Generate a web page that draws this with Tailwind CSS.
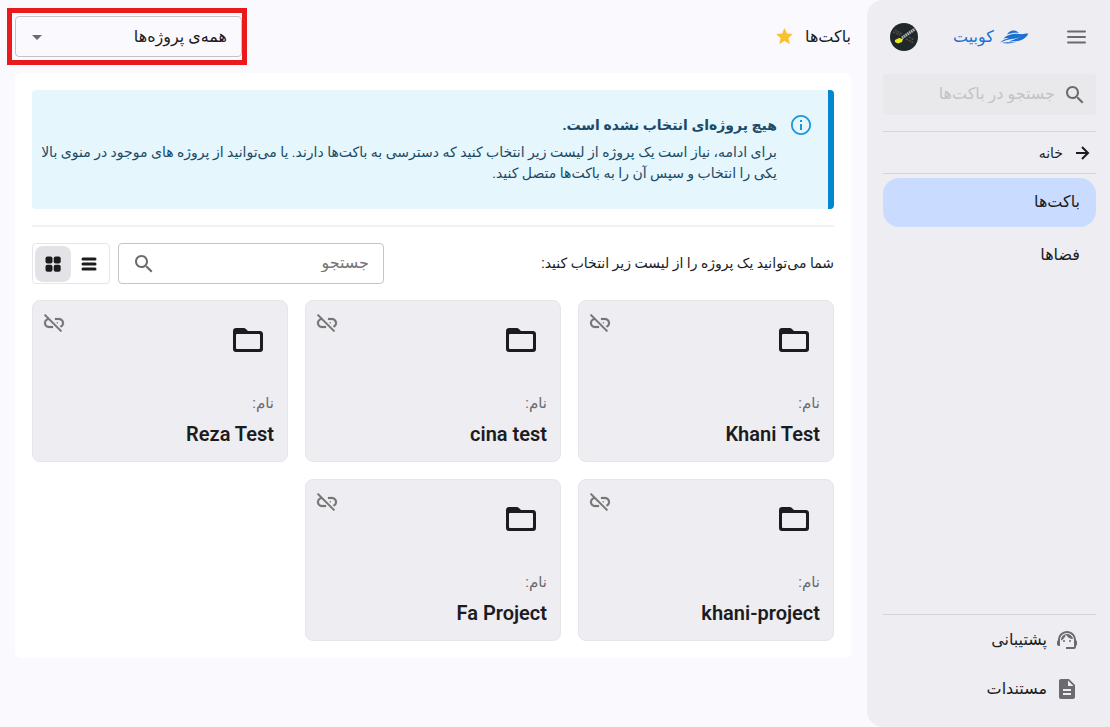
<!DOCTYPE html>
<html lang="fa" dir="rtl">
<head>
<meta charset="utf-8">
<meta name="viewport" content="width=device-width, initial-scale=1">
<title>باکت‌ها</title>
<script src="https://cdn.jsdelivr.net/npm/@tailwindcss/browser@4"></script>
</head>
<body class="flex min-h-screen bg-[#faf9fe] font-['Roboto','DejaVu_Sans',sans-serif] text-[#1c1c1e]">
<svg class="hidden" aria-hidden="true">
  <symbol id="search" viewBox="0 0 24 24"><path d="M15.5 14h-.79l-.28-.27C15.41 12.59 16 11.11 16 9.5 16 5.91 13.09 3 9.5 3S3 5.91 3 9.5 5.91 16 9.5 16c1.61 0 3.09-.59 4.23-1.57l.27.28v.79l5 4.99L20.49 19l-4.99-5zm-6 0C7.01 14 5 11.99 5 9.5S7.01 5 9.5 5 14 7.01 14 9.5 11.99 14 9.5 14z"/></symbol>
  <symbol id="unlink" viewBox="0 0 24 24"><path stroke="currentColor" stroke-width=".2" d="M17 7h-4v1.9h4c1.71 0 3.1 1.39 3.1 3.1 0 1.43-.98 2.63-2.31 2.98l1.46 1.46C20.88 15.61 22 13.95 22 12c0-2.76-2.24-5-5-5zM2 4.27l3.11 3.11C3.29 8.12 2 9.91 2 12c0 2.76 2.24 5 5 5h4v-1.9H7c-1.71 0-3.1-1.39-3.1-3.1 0-1.59 1.21-2.9 2.76-3.07L18.74 21 20 19.74 3.27 3 2 4.27z"/><circle cx="15.300" cy="11.800" r=".8"/></symbol>
  <symbol id="folder" viewBox="0 0 24 24"><path d="M19.300 18H4.700a.7.7 0 0 1-.7-.7V8.700a.7.7 0 0 1 .7-.7h14.600a.7.7 0 0 1 .7.7v8.600a.7.7 0 0 1-.7.7M20 6h-8l-1.400-1.400A2 2 0 0 0 9.200 4H4c-1.110 0-2 .89-2 2v12a2 2 0 0 0 2 2h16a2 2 0 0 0 2-2V8c0-1.110-.9-2-2-2z"/></symbol>
</svg>

<aside class="flex w-[243px] shrink-0 flex-col rounded-e-2xl bg-[#eeedf2] ps-[14px] pe-4">
  <div class="flex h-[74px] items-center justify-between ps-2">
    <button type="button" aria-label="منو" class="text-[#6b6b6f]"><svg class="size-6" viewBox="0 0 24 24" fill="none" stroke="currentColor" stroke-width="2" stroke-linecap="round"><path d="M4 6.500h17M4 12h17M4 17.500h17"/></svg></button>
    <a href="#" class="flex items-center gap-[5px] text-base text-[#1d6fd2]">
      <svg class="h-4 w-[30px]" viewBox="0 0 30 16" fill="currentColor" aria-hidden="true"><path d="M8 5.500C10 2.500 12 1.500 14 1.500C16 1.500 18 2 20 4C17 3.500 12 4 8 5.500z"/><path d="M6 8C11 4.500 17 4.300 20 5C24 5.500 26 4.500 29.300 4.500C28.500 7 25 10.500 21 11.500C17 12.500 13 12 10 12.500C14 10.800 18 10 21 8C15 10.500 9 10 5 12C3 12.800 2 13 1 13.500C2.500 11.500 6 10.500 10 9C8.500 9 6.500 9 4.500 9.500z"/><path d="M3 14C8 12.500 12 14 17 12.700C13 14.700 8 14.600 3 14z"/></svg>
      <span>کوبیت</span>
    </a>
    <button type="button" aria-label="حساب کاربری" class="me-[7px] size-7 overflow-hidden rounded-full"><svg class="size-7" viewBox="0 0 28 28"><path fill="#1f272b" d="M0 0h28v28H0z"/><path stroke="#a9acac" stroke-width="3" stroke-dasharray="1.600 .6" d="M12 15 25 6"/><path fill="#e8ea18" d="m5 17 4-2 4 1-1 3-4 1.500-3-1.500z"/><path stroke="#594a48" stroke-width="1.500" stroke-dasharray="2 1" d="m3 9 7 3M5 7l7 4m4 5 8 4m-5-6 5 3"/></svg></button>
  </div>

  <div class="flex h-[41px] items-center gap-2 rounded bg-[#e9e9eb] ps-[9px] text-[#6b6b6f]">
    <svg class="size-6 shrink-0" fill="currentColor"><use href="#search"/></svg>
    <input type="text" aria-label="جستجو در باکت‌ها" placeholder="جستجو در باکت‌ها" class="h-9 w-full min-w-0 bg-transparent pb-[2px] text-base leading-8 outline-none placeholder:leading-8 placeholder:text-[#c3c2c6]">
  </div>

  <a href="#" class="mt-4 flex h-[43px] items-center gap-[10px] border-y border-[#d6d5da] ps-[5px] text-sm">
    <svg class="size-[18px]" viewBox="0 0 18 18" fill="none" stroke="currentColor" stroke-width="2"><path d="M3 9h12M9 3l6 6-6 6"/></svg>
    خانه
  </a>
  <nav class="mt-1 flex flex-col gap-1 text-base">
    <a href="#" aria-current="page" class="flex h-[49px] items-center rounded-2xl bg-[#c9dcff] px-4 pb-[2px]">باکت‌ها</a>
    <a href="#" class="flex h-[49px] items-center rounded-2xl px-4 pb-[2px]">فضاها</a>
  </nav>

  <nav class="mt-auto flex flex-col border-t border-[#d6d5da] pb-[14px] text-base">
    <a href="#" class="flex h-[49px] items-center gap-2 ps-[17px]">
      <svg class="size-6 text-[#6b6b6f]" viewBox="0 0 24 24" fill="currentColor"><path d="M21 12.220C21 6.730 16.740 3 12 3c-4.690 0-9 3.650-9 9.280-.6.340-1 .980-1 1.720v2c0 1.100.9 2 2 2h1v-6.100c0-3.870 3.130-7 7-7s7 3.130 7 7V19h-8v2h8c1.100 0 2-.9 2-2v-1.220c.590-.310 1-.920 1-1.640v-2.300c0-.700-.410-1.310-1-1.620z"/><circle cx="9" cy="13" r="1"/><circle cx="15" cy="13" r="1"/><path d="M18 11.030C17.520 8.180 15.040 6 12.050 6c-3.030 0-6.290 2.510-6.030 6.450 2.470-1.010 4.330-3.210 4.860-5.890 1.310 2.630 4 4.440 7.120 4.470z"/></svg>
      پشتیبانی
    </a>
    <a href="#" class="flex h-[49px] items-center gap-2 ps-[17px]">
      <svg class="size-6 text-[#6b6b6f]" viewBox="0 0 24 24" fill="currentColor"><path d="M14 2H6c-1.100 0-1.990.9-1.990 2L4 20c0 1.100.890 2 1.990 2H18c1.100 0 2-.9 2-2V8l-6-6zm2 16H8v-2h8v2zm0-4H8v-2h8v2zm-3-5V3.500L18.500 9H13z"/></svg>
      مستندات
    </a>
  </nav>
</aside>

<main class="min-w-0 flex-1 ps-4 pe-[15px]">
  <header class="flex h-[73px] items-center justify-between">
    <h1 class="flex items-center gap-3 text-base">
      باکت‌ها
      <svg class="size-[17px] text-[#fbc02d]" viewBox="1 1 22 22" fill="currentColor" stroke="currentColor" stroke-linejoin="round"><path d="M12 17.270 18.180 21l-1.640-7.030L22 9.240l-7.190-.610L12 2 9.190 8.630 2 9.240l5.460 4.730L5.820 21z"/></svg>
    </h1>
    <div class="relative w-[227px]">
      <select aria-label="پروژه" class="h-[41px] w-full appearance-none rounded border border-[#c4c4c8] bg-transparent ps-[14px] pe-8 text-base"><option>همه‌ی پروژه‌ها</option></select>
      <svg class="pointer-events-none absolute top-[9px] left-[10px] size-6 text-[#6b6b6f]" viewBox="0 0 24 24" fill="currentColor"><path d="m7 10 5 5 5-5z"/></svg>
      <span class="pointer-events-none absolute -top-2 -right-[5px] -bottom-2 -left-2 border-5 border-[#e81a1c]"></span>
    </div>
  </header>

  <div class="rounded-md bg-white p-[17px]">
    <section role="alert" class="flex min-h-[119px] gap-[14px] rounded border-s-6 border-[#0288d1] bg-[#e5f6fd] ps-[17px] pe-2 pt-[23px] text-[#1b4b66]">
      <svg class="mt-[2px] size-5 shrink-0 text-[#1e95d9]" viewBox="2 2 20 20" fill="currentColor"><path d="M11 7h2v2h-2zm0 4h2v6h-2zm1-9C6.480 2 2 6.480 2 12s4.480 10 10 10 10-4.480 10-10S17.520 2 12 2zm0 18.200c-4.500 0-8.200-3.700-8.200-8.200S7.500 3.800 12 3.800s8.200 3.700 8.200 8.200-3.700 8.200-8.200 8.200z"/></svg>
      <div>
        <h2 class="text-sm leading-6 font-bold">هیچ پروژه‌ای انتخاب نشده است.</h2>
        <p class="mt-[5px] text-sm leading-[21px]">برای ادامه، نیاز است یک پروژه از لیست زیر انتخاب کنید که دسترسی به باکت‌ها دارند. یا می‌توانید از پروژه های موجود در منوی بالا یکی را انتخاب و سپس آن را به باکت‌ها متصل کنید.</p>
      </div>
    </section>

    <hr class="mt-4 border-t-2 border-[#f1f1f1]">

    <div class="mt-4 flex h-[41px] items-center gap-2">
      <p class="me-auto pb-[2px] text-sm">شما می‌توانید یک پروژه را از لیست زیر انتخاب کنید:</p>
      <div class="flex h-full w-[266px] items-center rounded border border-[#c4c4c4] ps-[14px] pe-[13px] text-[#6b6b6f]">
        <input type="text" aria-label="جستجو" placeholder="جستجو" class="h-9 w-full min-w-0 bg-transparent pb-[2px] text-base leading-8 outline-none placeholder:leading-8 placeholder:text-[#757575]">
        <svg class="size-6 shrink-0" fill="currentColor"><use href="#search"/></svg>
      </div>
      <div class="flex h-full items-center rounded border border-[#e6e6e6] px-[2px]">
        <button type="button" aria-label="نمای فهرست" class="grid size-9 place-items-center rounded-lg"><svg class="size-4" viewBox="0 0 16 16" fill="none" stroke="currentColor" stroke-width="3" stroke-linecap="round"><path d="M2 3h12M2 8h12M2 13h12"/></svg></button>
        <button type="button" aria-label="نمای شبکه‌ای" aria-pressed="true" class="grid size-9 place-items-center rounded-lg bg-[#e3e2e7]"><svg class="size-4" viewBox="0 0 16 16" fill="currentColor"><rect x="0.500" y="0.500" width="7" height="7" rx="2"/><rect x="8.700" y="0.500" width="7" height="7" rx="2"/><rect x="0.500" y="8.700" width="7" height="7" rx="2"/><rect x="8.700" y="8.700" width="7" height="7" rx="2"/></svg></button>
      </div>
    </div>

    <ul class="mt-4 grid grid-cols-3 gap-[17px]">
      <li class="relative flex h-[162px] flex-col rounded-lg border border-[#e6e6e9] bg-[#eeedf2] px-[13px] pt-[21px]">
        <button type="button" aria-label="اتصال" class="absolute top-[10px] left-[9px] text-[#757575]"><svg class="size-6" fill="currentColor"><use href="#unlink"/></svg></button>
        <svg class="ms-2 size-9" fill="currentColor"><use href="#folder"/></svg>
        <span class="mt-[35px] text-[15px] leading-5 text-[#6b6b6f]">نام:</span>
        <h3 class="mt-[9px] text-xl leading-6 font-semibold">Khani Test</h3>
      </li>
      <li class="relative flex h-[162px] flex-col rounded-lg border border-[#e6e6e9] bg-[#eeedf2] px-[13px] pt-[21px]">
        <button type="button" aria-label="اتصال" class="absolute top-[10px] left-[9px] text-[#757575]"><svg class="size-6" fill="currentColor"><use href="#unlink"/></svg></button>
        <svg class="ms-2 size-9" fill="currentColor"><use href="#folder"/></svg>
        <span class="mt-[35px] text-[15px] leading-5 text-[#6b6b6f]">نام:</span>
        <h3 class="mt-[9px] text-xl leading-6 font-semibold">cina test</h3>
      </li>
      <li class="relative flex h-[162px] flex-col rounded-lg border border-[#e6e6e9] bg-[#eeedf2] px-[13px] pt-[21px]">
        <button type="button" aria-label="اتصال" class="absolute top-[10px] left-[9px] text-[#757575]"><svg class="size-6" fill="currentColor"><use href="#unlink"/></svg></button>
        <svg class="ms-2 size-9" fill="currentColor"><use href="#folder"/></svg>
        <span class="mt-[35px] text-[15px] leading-5 text-[#6b6b6f]">نام:</span>
        <h3 class="mt-[9px] text-xl leading-6 font-semibold">Reza Test</h3>
      </li>
      <li class="relative flex h-[162px] flex-col rounded-lg border border-[#e6e6e9] bg-[#eeedf2] px-[13px] pt-[21px]">
        <button type="button" aria-label="اتصال" class="absolute top-[10px] left-[9px] text-[#757575]"><svg class="size-6" fill="currentColor"><use href="#unlink"/></svg></button>
        <svg class="ms-2 size-9" fill="currentColor"><use href="#folder"/></svg>
        <span class="mt-[35px] text-[15px] leading-5 text-[#6b6b6f]">نام:</span>
        <h3 class="mt-[9px] text-xl leading-6 font-semibold">khani-project</h3>
      </li>
      <li class="relative flex h-[162px] flex-col rounded-lg border border-[#e6e6e9] bg-[#eeedf2] px-[13px] pt-[21px]">
        <button type="button" aria-label="اتصال" class="absolute top-[10px] left-[9px] text-[#757575]"><svg class="size-6" fill="currentColor"><use href="#unlink"/></svg></button>
        <svg class="ms-2 size-9" fill="currentColor"><use href="#folder"/></svg>
        <span class="mt-[35px] text-[15px] leading-5 text-[#6b6b6f]">نام:</span>
        <h3 class="mt-[9px] text-xl leading-6 font-semibold">Fa Project</h3>
      </li>
    </ul>
  </div>
</main>
</body>
</html>
